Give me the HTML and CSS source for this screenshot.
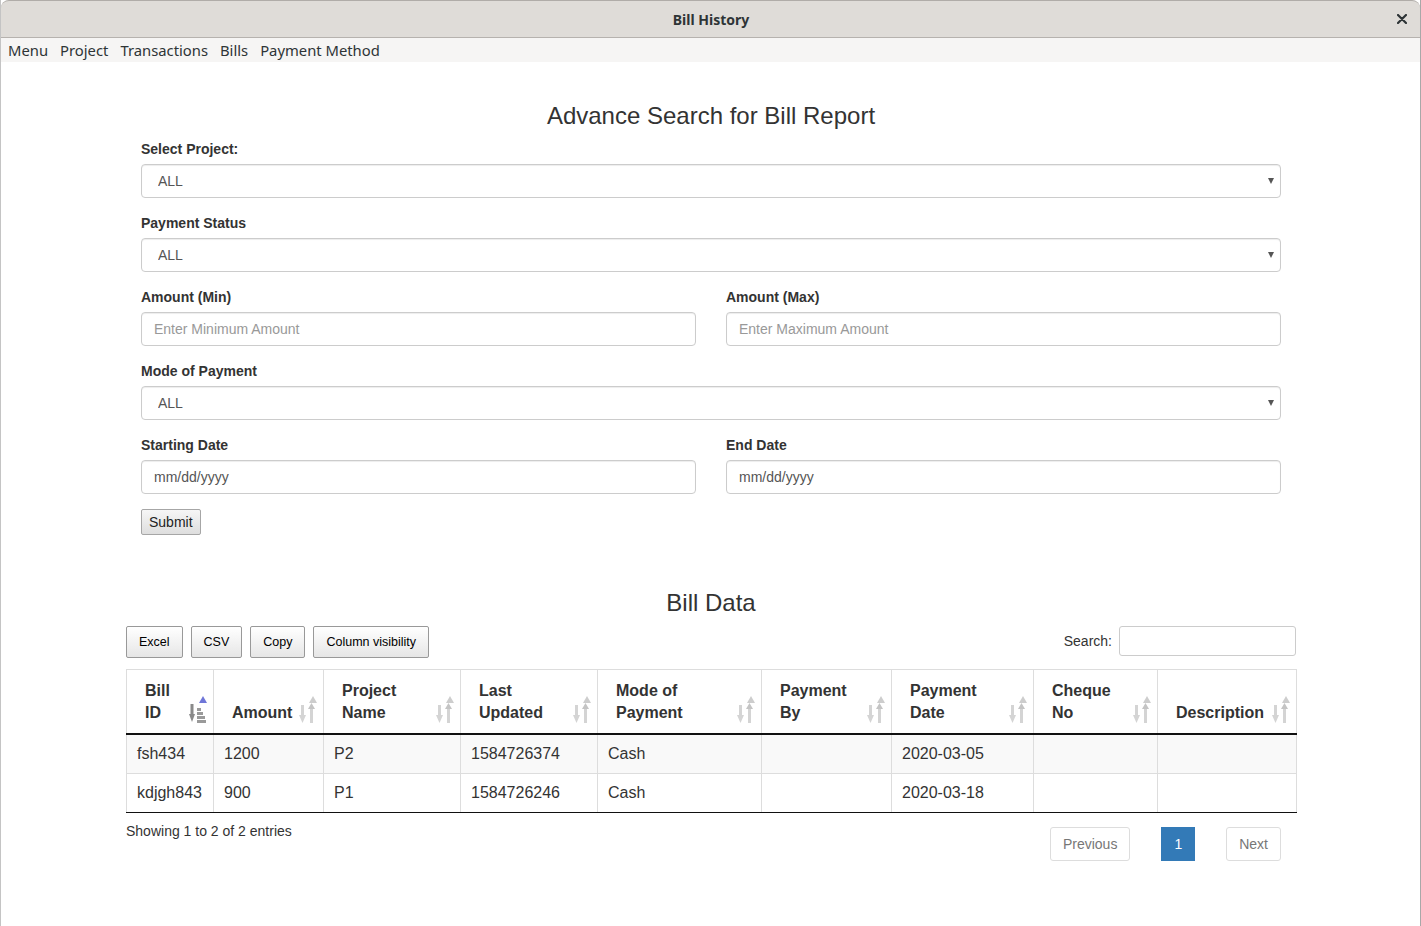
FILE: index.html
```html
<!DOCTYPE html>
<html lang="en">
<head>
<meta charset="utf-8">
<title>Bill History</title>
<link rel="stylesheet" href="styles.css">
</head>
<body>
<div class="window">
  <header class="titlebar">
    <span class="title">Bill History</span>
    <span class="close" aria-label="Close">
      <svg width="10" height="10" viewBox="0 0 10 10"><path d="M1 1 L9 9 M9 1 L1 9" stroke="#2e3436" stroke-width="2.2" stroke-linecap="round"/></svg>
    </span>
  </header>
  <nav class="menubar">
    <span class="menu-item">Menu</span>
    <span class="menu-item">Project</span>
    <span class="menu-item">Transactions</span>
    <span class="menu-item">Bills</span>
    <span class="menu-item">Payment Method</span>
  </nav>

  <main class="content">
    <section class="container">
      <h3 class="heading">Advance Search for Bill Report</h3>
      <form class="search-form">
        <div class="form-group">
          <label class="label">Select Project:</label>
          <div class="select-wrap"><select class="control select"><option>ALL</option></select></div>
        </div>
        <div class="form-group">
          <label class="label">Payment Status</label>
          <div class="select-wrap"><select class="control select"><option>ALL</option></select></div>
        </div>
        <div class="form-row">
          <div class="form-group col">
            <label class="label">Amount (Min)</label>
            <input class="control" type="text" placeholder="Enter Minimum Amount">
          </div>
          <div class="form-group col">
            <label class="label">Amount (Max)</label>
            <input class="control" type="text" placeholder="Enter Maximum Amount">
          </div>
        </div>
        <div class="form-group">
          <label class="label">Mode of Payment</label>
          <div class="select-wrap"><select class="control select"><option>ALL</option></select></div>
        </div>
        <div class="form-row">
          <div class="form-group col">
            <label class="label">Starting Date</label>
            <input class="control date" type="text" placeholder="mm/dd/yyyy">
          </div>
          <div class="form-group col">
            <label class="label">End Date</label>
            <input class="control date" type="text" placeholder="mm/dd/yyyy">
          </div>
        </div>
        <button class="submit" type="button">Submit</button>
      </form>
    </section>

    <section class="bill-data">
      <h3 class="heading data-heading">Bill Data</h3>
      <div class="toolbar">
        <div class="dt-buttons">
          <button class="dt-button" type="button">Excel</button>
          <button class="dt-button" type="button">CSV</button>
          <button class="dt-button" type="button">Copy</button>
          <button class="dt-button" type="button">Column visibility</button>
        </div>
        <label class="filter">Search:<input class="filter-input" type="search"></label>
      </div>

      <table class="bills">
        <thead>
          <tr>
            <th class="w1">Bill ID<span class="sort">
              <svg width="18" height="27" viewBox="0 0 18 27"><polygon points="10,7 18,7 14,0" fill="#6f76d8"/><rect x="1.5" y="8" width="3" height="12" fill="#8a8a8a"/><polygon points="0,18 6,18 3,26" fill="#8a8a8a"/><rect x="8" y="12" width="4" height="3" fill="#9a9a9a"/><rect x="8" y="16" width="6" height="3" fill="#9a9a9a"/><rect x="8" y="20" width="8" height="3" fill="#9a9a9a"/><rect x="8" y="24" width="9" height="3" fill="#9a9a9a"/></svg></span></th>
            <th class="w2">Amount<span class="sort"><svg width="18" height="27" viewBox="0 0 18 27"><rect x="2" y="9" width="3" height="12" fill="#d4d4d4"/><polygon points="0,19 7,19 3.5,27" fill="#d4d4d4"/><rect x="11" y="11" width="3" height="16" fill="#d4d4d4"/><polygon points="9,13 16,13 12.5,7" fill="#c4c4c4"/><polygon points="10,7 18,7 14,0" fill="#cdcdcd"/></svg></span></th>
            <th class="w3">Project Name<span class="sort"><svg width="18" height="27" viewBox="0 0 18 27"><rect x="2" y="9" width="3" height="12" fill="#d4d4d4"/><polygon points="0,19 7,19 3.5,27" fill="#d4d4d4"/><rect x="11" y="11" width="3" height="16" fill="#d4d4d4"/><polygon points="9,13 16,13 12.5,7" fill="#c4c4c4"/><polygon points="10,7 18,7 14,0" fill="#cdcdcd"/></svg></span></th>
            <th class="w4">Last Updated<span class="sort"><svg width="18" height="27" viewBox="0 0 18 27"><rect x="2" y="9" width="3" height="12" fill="#d4d4d4"/><polygon points="0,19 7,19 3.5,27" fill="#d4d4d4"/><rect x="11" y="11" width="3" height="16" fill="#d4d4d4"/><polygon points="9,13 16,13 12.5,7" fill="#c4c4c4"/><polygon points="10,7 18,7 14,0" fill="#cdcdcd"/></svg></span></th>
            <th class="w5">Mode of Payment<span class="sort"><svg width="18" height="27" viewBox="0 0 18 27"><rect x="2" y="9" width="3" height="12" fill="#d4d4d4"/><polygon points="0,19 7,19 3.5,27" fill="#d4d4d4"/><rect x="11" y="11" width="3" height="16" fill="#d4d4d4"/><polygon points="9,13 16,13 12.5,7" fill="#c4c4c4"/><polygon points="10,7 18,7 14,0" fill="#cdcdcd"/></svg></span></th>
            <th class="w6">Payment By<span class="sort"><svg width="18" height="27" viewBox="0 0 18 27"><rect x="2" y="9" width="3" height="12" fill="#d4d4d4"/><polygon points="0,19 7,19 3.5,27" fill="#d4d4d4"/><rect x="11" y="11" width="3" height="16" fill="#d4d4d4"/><polygon points="9,13 16,13 12.5,7" fill="#c4c4c4"/><polygon points="10,7 18,7 14,0" fill="#cdcdcd"/></svg></span></th>
            <th class="w7">Payment Date<span class="sort"><svg width="18" height="27" viewBox="0 0 18 27"><rect x="2" y="9" width="3" height="12" fill="#d4d4d4"/><polygon points="0,19 7,19 3.5,27" fill="#d4d4d4"/><rect x="11" y="11" width="3" height="16" fill="#d4d4d4"/><polygon points="9,13 16,13 12.5,7" fill="#c4c4c4"/><polygon points="10,7 18,7 14,0" fill="#cdcdcd"/></svg></span></th>
            <th class="w8">Cheque No<span class="sort"><svg width="18" height="27" viewBox="0 0 18 27"><rect x="2" y="9" width="3" height="12" fill="#d4d4d4"/><polygon points="0,19 7,19 3.5,27" fill="#d4d4d4"/><rect x="11" y="11" width="3" height="16" fill="#d4d4d4"/><polygon points="9,13 16,13 12.5,7" fill="#c4c4c4"/><polygon points="10,7 18,7 14,0" fill="#cdcdcd"/></svg></span></th>
            <th class="w9">Description<span class="sort"><svg width="18" height="27" viewBox="0 0 18 27"><rect x="2" y="9" width="3" height="12" fill="#d4d4d4"/><polygon points="0,19 7,19 3.5,27" fill="#d4d4d4"/><rect x="11" y="11" width="3" height="16" fill="#d4d4d4"/><polygon points="9,13 16,13 12.5,7" fill="#c4c4c4"/><polygon points="10,7 18,7 14,0" fill="#cdcdcd"/></svg></span></th>
          </tr>
        </thead>
        <tbody>
          <tr class="odd">
            <td>fsh434</td><td>1200</td><td>P2</td><td>1584726374</td><td>Cash</td><td></td><td>2020-03-05</td><td></td><td></td>
          </tr>
          <tr class="even">
            <td>kdjgh843</td><td>900</td><td>P1</td><td>1584726246</td><td>Cash</td><td></td><td>2020-03-18</td><td></td><td></td>
          </tr>
        </tbody>
      </table>

      <div class="table-footer">
        <div class="info">Showing 1 to 2 of 2 entries</div>
        <ul class="pagination">
          <li class="page disabled">Previous</li>
          <li class="page active">1</li>
          <li class="page disabled">Next</li>
        </ul>
      </div>
    </section>
  </main>
</div>
</body>
</html>
```

FILE: styles.css
```css
* { box-sizing: border-box; }

html, body {
  margin: 0;
  padding: 0;
  background: #ffffff;
}

.window {
  width: 1421px;
  height: 926px;
  border-left: 1px solid #c4c4c4;
  border-right: 1px solid #a8a8a8;
  padding-left: 1px;
  background: #ffffff;
  overflow: hidden;
  display: flex;
  flex-direction: column;
}

.titlebar {
  position: relative;
  height: 38px;
  flex: 0 0 38px;
  margin-left: -1px;
  background: #dfdcd8;
  border-top: 1px solid #b0aca8;
  border-bottom: 1px solid #b6b2ae;
  border-radius: 8px 8px 0 0;
  display: flex;
  align-items: center;
  justify-content: center;
  padding-left: 1px;
  font-family: "Noto Sans", "DejaVu Sans", sans-serif;
  font-weight: 700;
  font-size: 14px;
  color: #2e3436;
}

.close {
  position: absolute;
  right: 13px;
  top: 13px;
  width: 10px;
  height: 10px;
  display: block;
  line-height: 0;
}

.menubar {
  height: 24px;
  flex: 0 0 24px;
  margin-left: -1px;
  background: #f6f5f4;
  display: flex;
  align-items: center;
  padding-left: 1px;
  font-family: "Noto Sans", "DejaVu Sans", sans-serif;
  font-size: 14.8px;
  color: #2e3436;
}

.menu-item {
  padding: 0 6px;
}

.content {
  flex: 1;
  padding-top: 21px;
  font-family: "Liberation Sans", Arial, Helvetica, sans-serif;
  font-size: 14px;
  line-height: 20px;
  color: #333333;
}

.container {
  width: 1170px;
  margin: 0 auto;
  padding: 0 15px;
}

.heading {
  margin: 20px 0 10px;
  font-size: 24px;
  font-weight: 500;
  line-height: 26.4px;
  text-align: center;
  color: #333333;
}

.data-heading {
  margin-bottom: 9px;
}

.form-group {
  margin-bottom: 15px;
}

.form-row {
  display: flex;
  gap: 30px;
}

.col {
  flex: 1 1 0;
}

.label {
  display: inline-block;
  margin-bottom: 5px;
  font-weight: 700;
}

.control {
  display: block;
  width: 100%;
  height: 34px;
  padding: 6px 12px;
  font-family: "Liberation Sans", Arial, Helvetica, sans-serif;
  font-size: 14px;
  line-height: 20px;
  color: #555555;
  background: #ffffff;
  border: 1px solid #cccccc;
  border-radius: 4px;
  box-shadow: inset 0 1px 1px rgba(0, 0, 0, 0.075);
  outline: none;
}

.control::placeholder {
  color: #999999;
}

.date::placeholder {
  color: #555555;
}

.select-wrap {
  position: relative;
}

.select {
  -webkit-appearance: none;
  appearance: none;
  padding-left: 16px;
}

.select-wrap::after {
  content: "";
  position: absolute;
  right: 7px;
  top: 14px;
  border-left: 3px solid transparent;
  border-right: 3px solid transparent;
  border-top: 6px solid #555555;
}

.submit {
  display: block;
  height: 26px;
  padding: 0 7px;
  font-family: "Liberation Sans", Arial, Helvetica, sans-serif;
  font-size: 14px;
  color: #222222;
  background: linear-gradient(#f6f6f6, #dedede);
  border: 1px solid #a6a6a6;
  border-radius: 2px;
}

.bill-data {
  width: 1170px;
  margin: 0 auto;
  padding-top: 35px;
}

.toolbar {
  display: flex;
  justify-content: space-between;
  align-items: flex-start;
  height: 32px;
}

.dt-buttons {
  display: flex;
  gap: 8px;
}

.dt-button {
  height: 32px;
  padding: 0 12px;
  font-family: "Liberation Sans", Arial, Helvetica, sans-serif;
  font-size: 12.5px;
  color: #000000;
  background: linear-gradient(#ffffff, #e6e6e6);
  border: 1px solid #999999;
  border-radius: 2px;
}

.filter {
  display: flex;
  align-items: center;
  height: 30px;
  font-weight: 400;
  color: #333333;
}

.filter-input {
  width: 177px;
  height: 30px;
  margin-left: 7px;
  border: 1px solid #cccccc;
  border-radius: 3px;
  outline: none;
}

.bills {
  width: 1170px;
  margin-top: 11px;
  border-collapse: collapse;
  table-layout: fixed;
  font-size: 16px;
  line-height: 22px;
}

.bills th {
  position: relative;
  padding: 10px 30px 9px 18px;
  text-align: left;
  vertical-align: bottom;
  font-weight: 700;
  color: #333333;
  border-top: 1px solid #dddddd;
  border-left: 1px solid #dddddd;
  border-right: 1px solid #dddddd;
  border-bottom: 2px solid #111111;
}

.bills td {
  padding: 8px 10px;
  color: #333333;
  border: 1px solid #dddddd;
  line-height: 22px;
}

.bills tbody tr:last-child td {
  border-bottom: 1px solid #111111;
}

.bills tr.odd td {
  background: #f9f9f9;
}

.sort {
  position: absolute;
  right: 6px;
  bottom: 10px;
  line-height: 0;
}

.w1 { width: 87px; }
.w2 { width: 110px; }
.w3 { width: 137px; }
.w4 { width: 137px; }
.w5 { width: 164px; }
.w6 { width: 130px; }
.w7 { width: 142px; }
.w8 { width: 124px; }
.w9 { width: 139px; }

.table-footer {
  display: flex;
  justify-content: space-between;
  align-items: flex-start;
}

.info {
  padding-top: 8px;
  color: #333333;
}

.pagination {
  display: flex;
  gap: 31px;
  margin: 14px 15px 0 0;
  padding: 0;
  list-style: none;
}

.page {
  height: 34px;
  padding: 6px 12px;
  line-height: 20px;
  border: 1px solid #dddddd;
  border-radius: 3px;
  color: #777777;
  background: #ffffff;
}

.page.active {
  color: #ffffff;
  background: #337ab7;
  border-color: #337ab7;
  border-radius: 0;
}
```
